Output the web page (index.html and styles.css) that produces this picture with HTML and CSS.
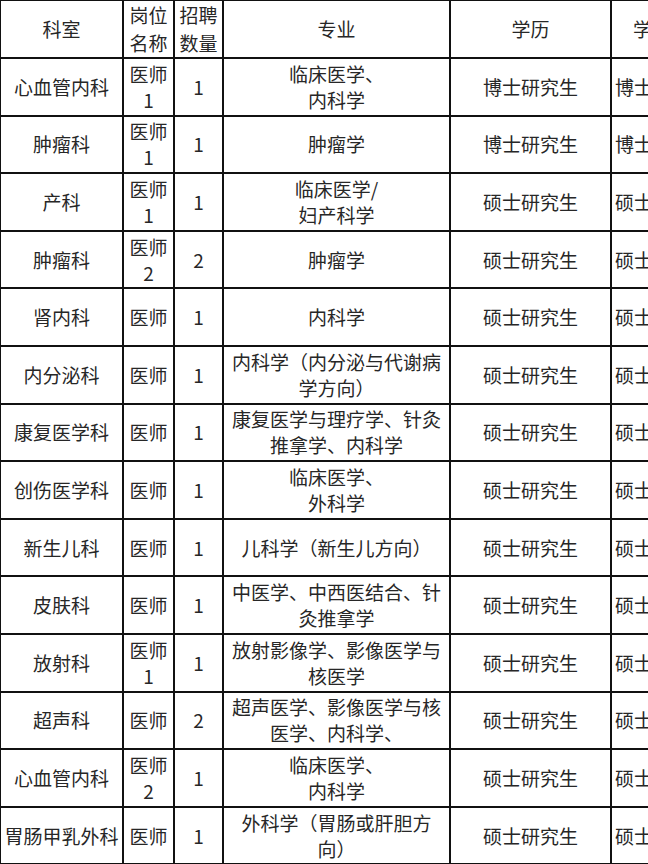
FILE: index.html
```html
<!DOCTYPE html>
<html lang="zh-CN">
<head>
<meta charset="utf-8">
<title>招聘岗位表</title>
<link rel="stylesheet" href="styles.css">
</head>
<body>
<table class="jobs">
  <colgroup>
    <col class="c-dept">
    <col class="c-post">
    <col class="c-num">
    <col class="c-major">
    <col class="c-edu">
    <col class="c-deg">
  </colgroup>
  <thead>
    <tr class="head">
      <th>科室</th>
      <th>岗位名称</th>
      <th>招聘数量</th>
      <th>专业</th>
      <th>学历</th>
      <th>学位</th>
    </tr>
  </thead>
  <tbody>
    <tr><td>心血管内科</td><td>医师<br>1</td><td>1</td><td>临床医学、<br>内科学</td><td>博士研究生</td><td>博士学位</td></tr>
    <tr><td>肿瘤科</td><td>医师<br>1</td><td>1</td><td>肿瘤学</td><td>博士研究生</td><td>博士学位</td></tr>
    <tr><td>产科</td><td>医师<br>1</td><td>1</td><td>临床医学/<br>妇产科学</td><td>硕士研究生</td><td>硕士学位</td></tr>
    <tr><td>肿瘤科</td><td>医师<br>2</td><td>2</td><td>肿瘤学</td><td>硕士研究生</td><td>硕士学位</td></tr>
    <tr><td>肾内科</td><td>医师</td><td>1</td><td>内科学</td><td>硕士研究生</td><td>硕士学位</td></tr>
    <tr><td>内分泌科</td><td>医师</td><td>1</td><td>内科学（内分泌与代谢病学方向）</td><td>硕士研究生</td><td>硕士学位</td></tr>
    <tr><td>康复医学科</td><td>医师</td><td>1</td><td>康复医学与理疗学、针灸推拿学、内科学</td><td>硕士研究生</td><td>硕士学位</td></tr>
    <tr><td>创伤医学科</td><td>医师</td><td>1</td><td>临床医学、<br>外科学</td><td>硕士研究生</td><td>硕士学位</td></tr>
    <tr><td>新生儿科</td><td>医师</td><td>1</td><td>儿科学（新生儿方向）</td><td>硕士研究生</td><td>硕士学位</td></tr>
    <tr><td>皮肤科</td><td>医师</td><td>1</td><td>中医学、中西医结合、针灸推拿学</td><td>硕士研究生</td><td>硕士学位</td></tr>
    <tr><td>放射科</td><td>医师<br>1</td><td>1</td><td>放射影像学、影像医学与核医学</td><td>硕士研究生</td><td>硕士学位</td></tr>
    <tr><td>超声科</td><td>医师</td><td>2</td><td>超声医学、影像医学与核医学、内科学、</td><td>硕士研究生</td><td>硕士学位</td></tr>
    <tr><td>心血管内科</td><td>医师<br>2</td><td>1</td><td>临床医学、<br>内科学</td><td>硕士研究生</td><td>硕士学位</td></tr>
    <tr><td>胃肠甲乳外科</td><td>医师</td><td>1</td><td>外科学（胃肠或肝胆方向）</td><td>硕士研究生</td><td>硕士学位</td></tr>
  </tbody>
</table>
</body>
</html>
```
FILE: styles.css
```css
html, body {
  margin: 0;
  padding: 0;
  background: #ffffff;
  overflow: hidden;
}

body {
  width: 648px;
  height: 864px;
  font-family: "Noto Sans CJK SC", "Noto Sans", sans-serif;
  color: #272727;
}

.jobs {
  border-collapse: collapse;
  table-layout: fixed;
  margin: -1px 0 0 -1px;
  width: 693px;
}

.c-dept { width: 123px; }
.c-post { width: 51px; }
.c-num { width: 49px; }
.c-major { width: 227px; }
.c-edu { width: 161px; }
.c-deg { width: 82px; }

.jobs th,
.jobs td {
  border: 2px solid #111111;
  padding: 0 5px;
  text-align: center;
  vertical-align: middle;
  font-size: 19px;
  font-weight: 400;
  line-height: 26px;
  word-break: break-all;
}

.jobs th:nth-child(2),
.jobs th:nth-child(3),
.jobs td:nth-child(2),
.jobs td:nth-child(3) {
  padding: 0;
}

.jobs td:first-child {
  padding: 0 2px;
  white-space: nowrap;
}

.jobs td:last-child {
  padding: 0 3px;
  white-space: nowrap;
}

.jobs .head {
  height: 56px;
}

.jobs .head th {
  line-height: 28px;
}

.jobs tbody tr {
  height: 57.6px;
}
```
